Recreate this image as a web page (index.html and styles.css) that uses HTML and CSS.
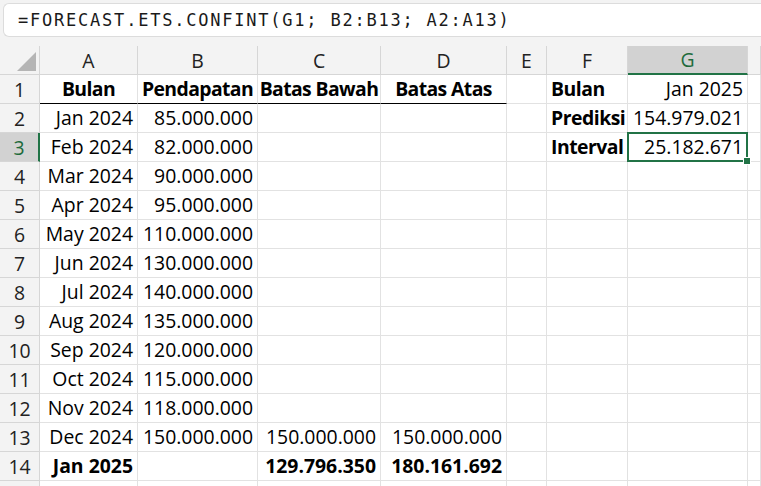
FILE: index.html
```html
<!DOCTYPE html>
<html>
<head>
<meta charset="utf-8">
<link rel="stylesheet" href="styles.css">
</head>
<body>
<div class="topbar">
  <div class="formula">=FORECAST.ETS.CONFINT(G1; B2:B13; A2:A13)</div>
</div>
<div class="sheet">
  <div class="hd corner"><svg width="22" height="22" viewBox="0 0 22 22"><polygon points="21,2 21,21 2,21" fill="#b5b5b5"/></svg></div>
  <div class="hd col">A</div><div class="hd col">B</div><div class="hd col">C</div><div class="hd col">D</div><div class="hd col">E</div><div class="hd col">F</div><div class="hd col sel">G</div><div class="hd col"></div>

  <div class="hd row">1</div>
  <div class="c ctr b ul">Bulan</div><div class="c ctr b ul">Pendapatan</div><div class="c ctr b ul">Batas Bawah</div><div class="c ctr b ul">Batas Atas</div><div class="c"></div><div class="c b lbl">Bulan</div><div class="c r">Jan 2025</div><div class="c"></div>

  <div class="hd row">2</div>
  <div class="c r">Jan 2024</div><div class="c r">85.000.000</div><div class="c"></div><div class="c"></div><div class="c"></div><div class="c b lbl">Prediksi</div><div class="c r">154.979.021</div><div class="c"></div>

  <div class="hd row rsel">3</div>
  <div class="c r">Feb 2024</div><div class="c r">82.000.000</div><div class="c"></div><div class="c"></div><div class="c"></div><div class="c b lbl">Interval</div><div class="c r active">25.182.671</div><div class="c"></div>

  <div class="hd row">4</div>
  <div class="c r">Mar 2024</div><div class="c r">90.000.000</div><div class="c"></div><div class="c"></div><div class="c"></div><div class="c"></div><div class="c"></div><div class="c"></div>

  <div class="hd row">5</div>
  <div class="c r">Apr 2024</div><div class="c r">95.000.000</div><div class="c"></div><div class="c"></div><div class="c"></div><div class="c"></div><div class="c"></div><div class="c"></div>

  <div class="hd row">6</div>
  <div class="c r">May 2024</div><div class="c r">110.000.000</div><div class="c"></div><div class="c"></div><div class="c"></div><div class="c"></div><div class="c"></div><div class="c"></div>

  <div class="hd row">7</div>
  <div class="c r">Jun 2024</div><div class="c r">130.000.000</div><div class="c"></div><div class="c"></div><div class="c"></div><div class="c"></div><div class="c"></div><div class="c"></div>

  <div class="hd row">8</div>
  <div class="c r">Jul 2024</div><div class="c r">140.000.000</div><div class="c"></div><div class="c"></div><div class="c"></div><div class="c"></div><div class="c"></div><div class="c"></div>

  <div class="hd row">9</div>
  <div class="c r">Aug 2024</div><div class="c r">135.000.000</div><div class="c"></div><div class="c"></div><div class="c"></div><div class="c"></div><div class="c"></div><div class="c"></div>

  <div class="hd row">10</div>
  <div class="c r">Sep 2024</div><div class="c r">120.000.000</div><div class="c"></div><div class="c"></div><div class="c"></div><div class="c"></div><div class="c"></div><div class="c"></div>

  <div class="hd row">11</div>
  <div class="c r">Oct 2024</div><div class="c r">115.000.000</div><div class="c"></div><div class="c"></div><div class="c"></div><div class="c"></div><div class="c"></div><div class="c"></div>

  <div class="hd row">12</div>
  <div class="c r">Nov 2024</div><div class="c r">118.000.000</div><div class="c"></div><div class="c"></div><div class="c"></div><div class="c"></div><div class="c"></div><div class="c"></div>

  <div class="hd row">13</div>
  <div class="c r">Dec 2024</div><div class="c r">150.000.000</div><div class="c r">150.000.000</div><div class="c r">150.000.000</div><div class="c"></div><div class="c"></div><div class="c"></div><div class="c"></div>

  <div class="hd row">14</div>
  <div class="c r b">Jan 2025</div><div class="c"></div><div class="c r b">129.796.350</div><div class="c r b">180.161.692</div><div class="c"></div><div class="c"></div><div class="c"></div><div class="c"></div>

  <div class="hd row"></div>
  <div class="c"></div><div class="c"></div><div class="c"></div><div class="c"></div><div class="c"></div><div class="c"></div><div class="c"></div><div class="c"></div>
</div>
</body>
</html>
```

FILE: styles.css
```css
html, body {
  margin: 0;
  padding: 0;
  background: #ffffff;
  overflow: hidden;
}
body {
  width: 761px;
  height: 486px;
}
.topbar {
  background: #f3f3f3;
  height: 46px;
  padding: 3px 0 0 3px;
  box-sizing: border-box;
}
.formula {
  height: 34px;
  box-sizing: border-box;
  background: #ffffff;
  border: 1px solid #dcdcdc;
  border-right: none;
  border-radius: 6px 0 0 6px;
  padding-left: 14px;
  font-family: "DejaVu Sans Mono", monospace;
  font-size: 17px;
  letter-spacing: 1.78px;
  line-height: 33px;
  color: #1a1a1a;
  white-space: nowrap;
  overflow: hidden;
}
.sheet {
  display: grid;
  grid-template-columns: 40px 98px 120px 123px 126px 40px 81px 120px 13px;
  grid-auto-rows: 29px;
  font-family: "Open Sans", sans-serif;
  font-size: 19.4px;
  color: #000;
}
.hd {
  background: #f3f3f3;
  color: #222;
  display: flex;
  align-items: center;
  justify-content: center;
  box-sizing: border-box;
  border-right: 1px solid #d6d6d6;
  border-bottom: 1px solid #d6d6d6;
  font-size: 19.4px;
}
.corner {
  justify-content: flex-end;
  align-items: flex-end;
  padding: 0 2px 2px 0;
}
.corner svg { display: block; }
.hd.col.sel {
  background: #d2d2d2;
  color: #1e6b3c;
  border-bottom: 2px solid #217346;
}
.hd.row.rsel {
  background: #d2d2d2;
  color: #1e6b3c;
  border-right: 2px solid #217346;
}
.c {
  box-sizing: border-box;
  border-right: 1px solid #e2e2e2;
  border-bottom: 1px solid #e2e2e2;
  display: flex;
  align-items: center;
  padding: 0 3px 0 4px;
  white-space: nowrap;
  overflow: visible;
  line-height: 1;
}
.c.r { justify-content: flex-end; padding-right: 4px; }
.c.ctr { justify-content: center; padding: 0; }
.c.b { font-weight: 700; }
.c.ul { border-bottom: 1px solid #000; letter-spacing: -0.6px; }
.c.lbl { letter-spacing: -0.5px; }
.c.active {
  position: relative;
}
.c.active::after {
  content: "";
  position: absolute;
  left: -1px;
  top: -1px;
  right: -1px;
  bottom: -1px;
  border: 2px solid #217346;
  pointer-events: none;
}
.c.active::before {
  content: "";
  position: absolute;
  right: -4px;
  bottom: -4px;
  width: 6px;
  height: 6px;
  background: #217346;
  border: 1px solid #fff;
  z-index: 2;
}
```
